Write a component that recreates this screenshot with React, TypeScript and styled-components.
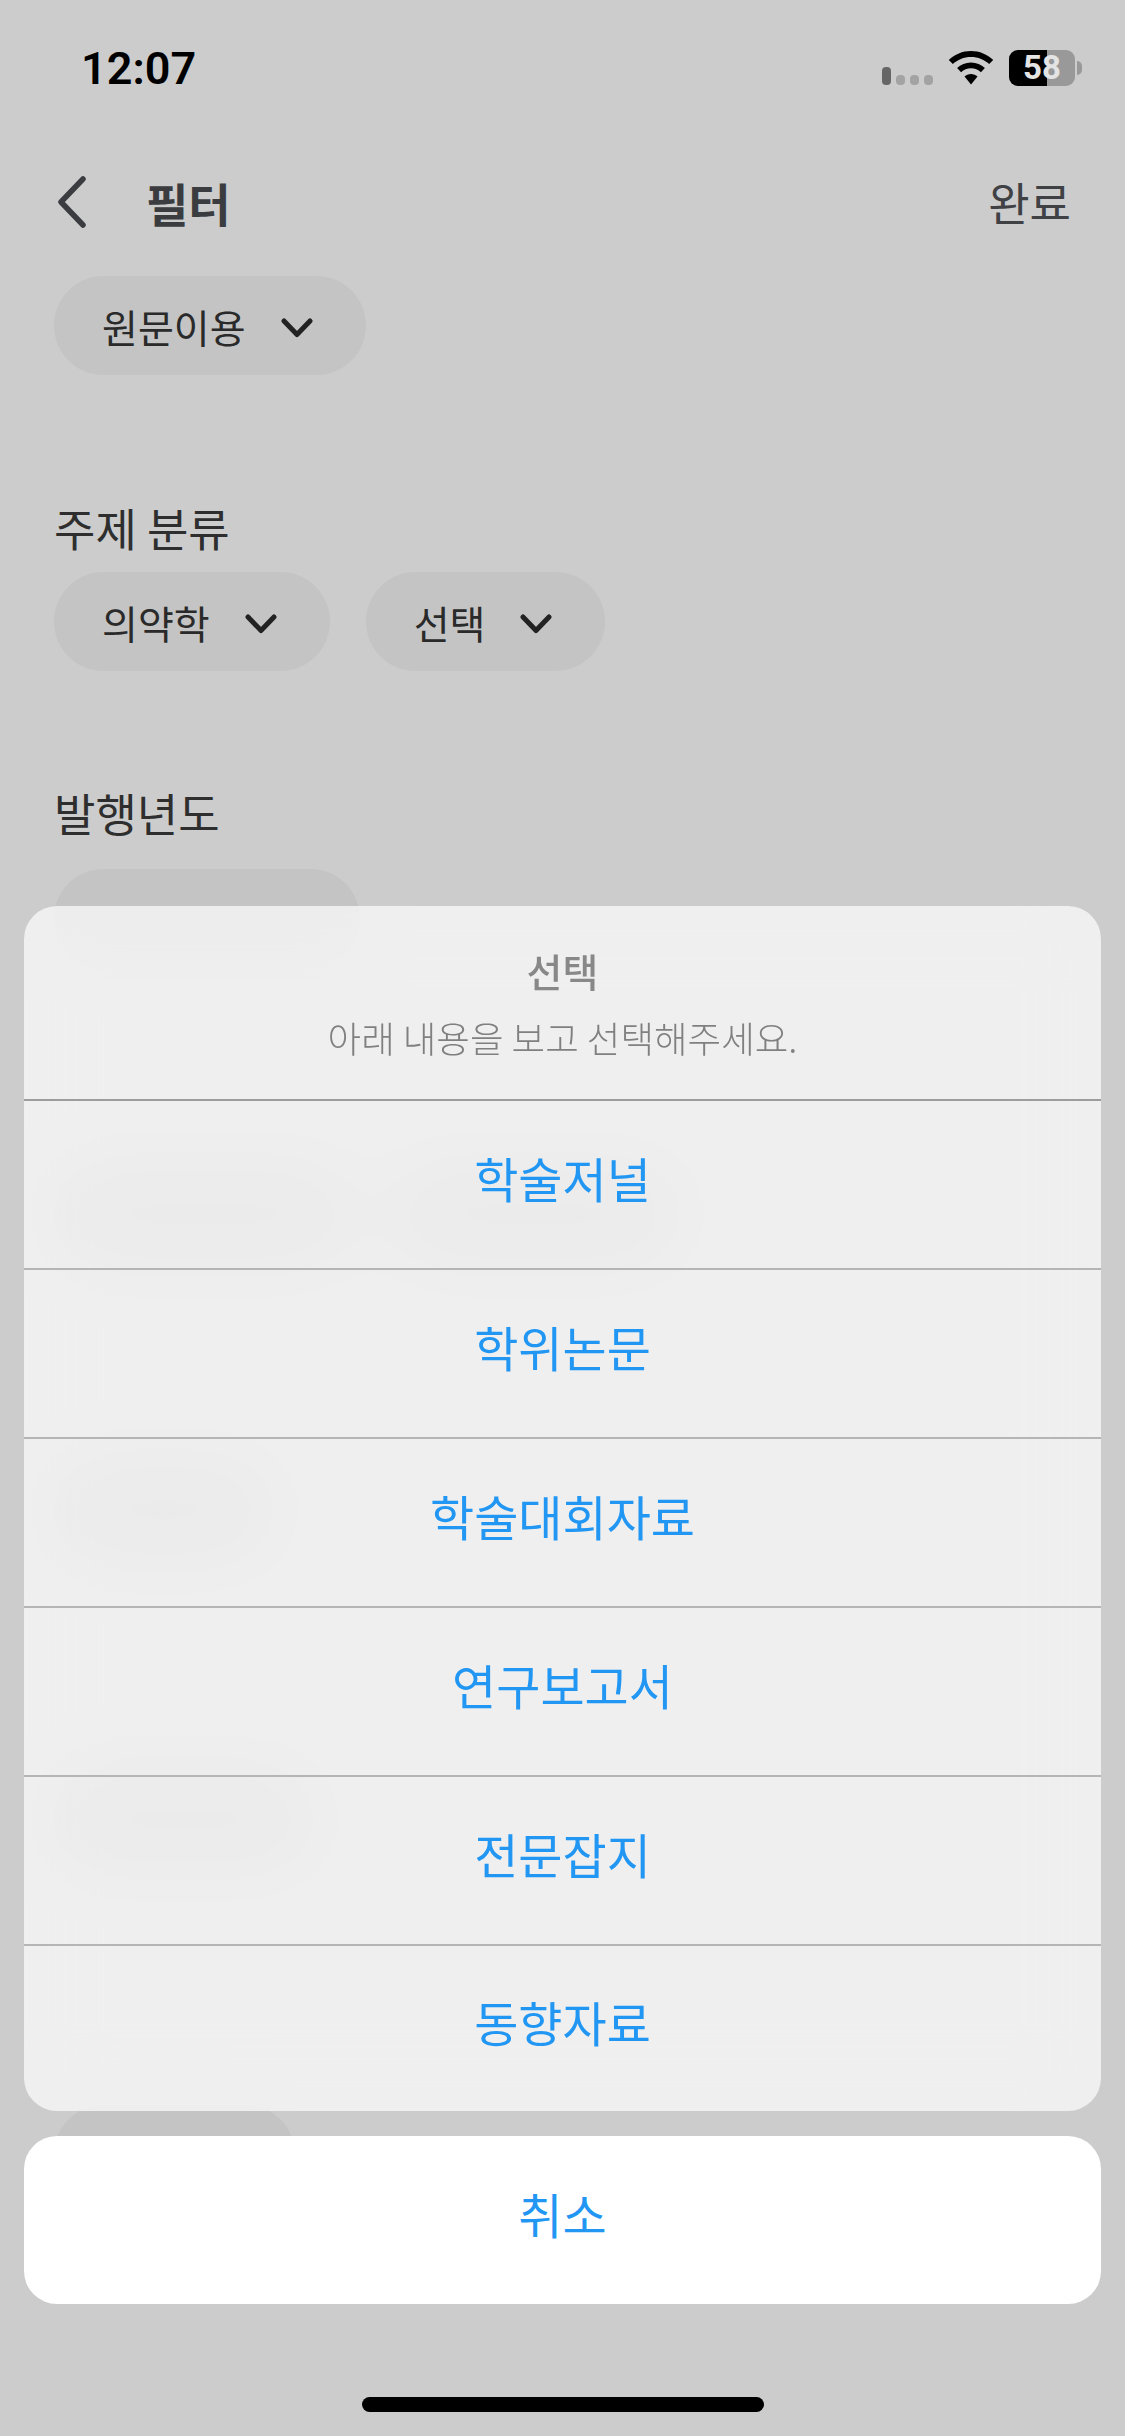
import React from "react";
import styled, { createGlobalStyle } from "styled-components";

const FONT = `"Noto Sans CJK KR", "Noto Sans", sans-serif`;

const Global = createGlobalStyle`
  html, body { margin: 0; padding: 0; background: #cccccc; }
  * { box-sizing: border-box; }
`;

const Screen = styled.div`
  position: relative;
  width: 1125px;
  height: 2436px;
  overflow: hidden;
  background: #cccccc;
  font-family: ${FONT};
`;

const StatusBar = styled.div`
  height: 100px;
  padding: 43px 43px 0 81px;
  display: flex;
  justify-content: space-between;
  align-items: flex-start;
`;

const Clock = styled.div`
  font-family: Roboto, sans-serif;
  font-weight: 600;
  font-size: 45px;
  line-height: 52px;
  color: #000;
`;

const StatusIcons = styled.div`
  display: flex;
  align-items: flex-start;
  padding-top: 8px;
`;

const Signal = styled.div`
  display: flex;
  align-items: flex-end;
  gap: 5px;
  height: 34px;
  margin-right: 15px;
`;

const SignalBar = styled.span<{ $on?: boolean }>`
  display: block;
  width: 9px;
  height: ${(p) => (p.$on ? 18 : 10)}px;
  border-radius: 4px;
  background: ${(p) => (p.$on ? "#666666" : "#a3a3a3")};
`;

const WifiIcon = styled.svg`
  display: block;
  width: 46px;
  height: 34px;
  margin-right: 15px;
`;

const Battery = styled.div`
  position: relative;
  width: 66px;
  height: 36px;
  border-radius: 9px;
  background: #999999;
  margin-top: -1px;
`;

const BatteryFill = styled.div`
  height: 100%;
  border-radius: 9px 0 0 9px;
  background: #000;
`;

const BatteryText = styled.span`
  position: absolute;
  inset: 0;
  text-align: center;
  font-family: Roboto, sans-serif;
  font-weight: 700;
  font-size: 33px;
  line-height: 36px;
  color: #e4e4e4;
`;

const BatteryCap = styled.div`
  width: 5px;
  height: 14px;
  margin: 10px 0 0 2px;
  border-radius: 0 5px 5px 0;
  background: #999999;
`;

const Header = styled.div`
  height: 76px;
  padding: 0 54px 0 57px;
  display: flex;
  align-items: center;
  margin-top: 64px;
`;

const BackIcon = styled.svg`
  display: block;
  width: 30px;
  height: 52px;
  margin-right: 59px;
`;

const Title = styled.div`
  flex: 1;
  font-size: 46px;
  font-weight: 700;
  line-height: 76px;
  color: #3a3c40;
`;

const Done = styled.div`
  font-size: 45px;
  line-height: 76px;
  color: #3f4144;
`;

const Body = styled.div`
  padding: 36px 54px 0;
`;

const ChipRow = styled.div`
  display: flex;
  gap: 36px;
`;

const Chip = styled.div`
  height: 99px;
  padding: 0 53px 0 48px;
  display: inline-flex;
  align-items: center;
  gap: 35px;
  border-radius: 50px;
  background: #c4c4c4;
  font-size: 39px;
  color: #2a2a2a;
  white-space: nowrap;
`;

const BlankChip = styled.div<{ $w: number; $hidden?: boolean }>`
  width: ${(p) => p.$w}px;
  height: 99px;
  border-radius: 50px;
  background: ${(p) => (p.$hidden ? "#bdbdbd" : "#c4c4c4")};
`;

const Chevron = styled.svg`
  display: block;
  flex: none;
  width: 32px;
  height: 20px;
  margin-top: 5px;
`;

const Section = styled.div<{ $top: number }>`
  margin-top: ${(p) => p.$top}px;
`;

const Label = styled.div<{ $gap: number }>`
  font-size: 45px;
  line-height: 66px;
  margin-bottom: ${(p) => p.$gap}px;
  color: #2e2e2e;
`;

const HiddenRow = styled(ChipRow)<{ $top: number }>`
  margin-top: ${(p) => p.$top}px;
`;

const ActionOverlay = styled.div`
  position: absolute;
  left: 24px;
  right: 24px;
  bottom: 132px;
  display: flex;
  flex-direction: column;
  gap: 25px;
`;

const Sheet = styled.div`
  border-radius: 33px;
  overflow: hidden;
  background: rgba(255, 255, 255, 0.69);
  backdrop-filter: blur(36px);
`;

const SheetHead = styled.div`
  height: 193px;
  padding-top: 38px;
  text-align: center;
`;

const SheetTitle = styled.div`
  font-size: 39px;
  line-height: 52px;
  font-weight: 500;
  color: #888888;
`;

const SheetSub = styled.div`
  margin-top: 16px;
  font-size: 36.5px;
  line-height: 52px;
  font-weight: 300;
  color: #808080;
`;

const Option = styled.div`
  height: 169px;
  padding-bottom: 16px;
  display: flex;
  align-items: center;
  justify-content: center;
  border-top: 2px solid #b5b5b5;
  font-size: 48px;
  color: #2196f3;

  &:nth-child(2) {
    border-top-color: #9c9c9c;
  }
  &:last-child {
    height: 167px;
  }
`;

const Cancel = styled.div`
  height: 168px;
  padding-bottom: 15px;
  border-radius: 33px;
  background: #fff;
  display: flex;
  align-items: center;
  justify-content: center;
  font-size: 48px;
  color: #2196f3;
`;

const HomeBar = styled.div`
  position: absolute;
  left: 362px;
  bottom: 24px;
  width: 402px;
  height: 15px;
  border-radius: 8px;
  background: #000;
`;

const Down = () => (
  <Chevron viewBox="0 0 32 20" fill="none">
    <path d="M3 3 L16 16.5 L29 3" stroke="#222" strokeWidth="5" strokeLinecap="round" strokeLinejoin="round" />
  </Chevron>
);

const OPTIONS = ["학술저널", "학위논문", "학술대회자료", "연구보고서", "전문잡지", "동향자료"];

export default function App() {
  return (
    <Screen>
      <Global />
      <StatusBar>
        <Clock>12:07</Clock>
        <StatusIcons>
          <Signal>
            <SignalBar $on />
            <SignalBar />
            <SignalBar />
            <SignalBar />
          </Signal>
          <WifiIcon viewBox="0 0 46 34">
            <path
              d="M23 0C14.4 0 6.6 3.4 0.8 8.9l4 4.2C9.5 8.7 15.9 6 23 6s13.5 2.7 18.2 7.1l4-4.2C39.4 3.4 31.6 0 23 0z"
              fill="#000"
            />
            <path
              d="M23 11.5c-5.4 0-10.3 2.1-13.9 5.5l4 4.2c2.6-2.4 6.1-3.9 9.9-3.9s7.3 1.5 9.9 3.9l4-4.2c-3.6-3.4-8.5-5.5-13.900-5.500z"
              fill="#000"
            />
            <path d="M23 23c-2.5 0-4.8 1-6.5 2.5L23 33.5l6.5-8C27.8 24 25.5 23 23 23z" fill="#000" />
          </WifiIcon>
          <Battery>
            <BatteryFill style={{ width: "58%" }} />
            <BatteryText>58</BatteryText>
          </Battery>
          <BatteryCap />
        </StatusIcons>
      </StatusBar>

      <Header>
        <BackIcon viewBox="0 0 30 52" fill="none">
          <path d="M26 3 L4 26 L26 49" stroke="#3a3c40" strokeWidth="5.5" strokeLinecap="round" strokeLinejoin="round" />
        </BackIcon>
        <Title>필터</Title>
        <Done>완료</Done>
      </Header>

      <Body>
        <ChipRow>
          <Chip>
            원문이용
            <Down />
          </Chip>
        </ChipRow>

        <Section $top={120}>
          <Label $gap={11}>주제 분류</Label>
          <ChipRow>
            <Chip>
              의약학
              <Down />
            </Chip>
            <Chip>
              선택
              <Down />
            </Chip>
          </ChipRow>
        </Section>

        <Section $top={109}>
          <Label $gap={23}>발행년도</Label>
          <ChipRow>
            <BlankChip $w={306} />
          </ChipRow>
        </Section>

        <HiddenRow $top={197}>
          <BlankChip $hidden $w={300} />
          <BlankChip $hidden $w={290} />
        </HiddenRow>
        <HiddenRow $top={197}>
          <BlankChip $hidden $w={220} />
        </HiddenRow>
        <HiddenRow $top={209}>
          <BlankChip $hidden $w={260} />
        </HiddenRow>
        <HiddenRow $top={237}>
          <BlankChip $w={241} />
        </HiddenRow>
      </Body>

      <ActionOverlay>
        <Sheet>
          <SheetHead>
            <SheetTitle>선택</SheetTitle>
            <SheetSub>아래 내용을 보고 선택해주세요.</SheetSub>
          </SheetHead>
          {OPTIONS.map((o) => (
            <Option key={o}>{o}</Option>
          ))}
        </Sheet>
        <Cancel>취소</Cancel>
      </ActionOverlay>

      <HomeBar />
    </Screen>
  );
}
